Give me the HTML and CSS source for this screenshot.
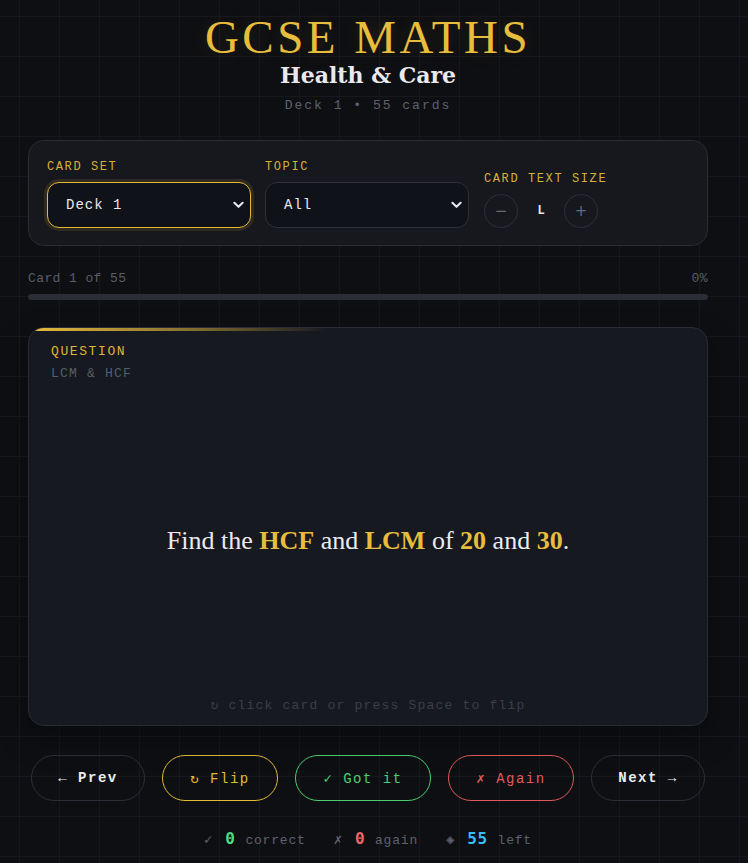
FILE: index.html
```html
<!DOCTYPE html>
<html lang="en">
<head>
<meta charset="utf-8">
<title>GCSE Maths Flashcards</title>
<link rel="stylesheet" href="styles.css">
</head>
<body>
<div class="page">
  <header class="header">
    <h1 class="title">GCSE MATHS</h1>
    <h2 class="subtitle">Health &amp; Care</h2>
    <p class="meta">Deck 1 • 55 cards</p>
  </header>

  <section class="controls">
    <div class="field field-select">
      <label class="label">CARD SET</label>
      <div class="select focused"><span>Deck 1</span><svg class="chev" viewBox="0 0 12 8" width="11" height="8"><path d="M1.5 1.5 L6 6 L10.5 1.5" fill="none" stroke="#e8e8ec" stroke-width="2.2" stroke-linecap="round" stroke-linejoin="round"/></svg></div>
    </div>
    <div class="field field-select">
      <label class="label">TOPIC</label>
      <div class="select"><span>All</span><svg class="chev" viewBox="0 0 12 8" width="11" height="8"><path d="M1.5 1.5 L6 6 L10.5 1.5" fill="none" stroke="#e8e8ec" stroke-width="2.2" stroke-linecap="round" stroke-linejoin="round"/></svg></div>
    </div>
    <div class="field field-size">
      <label class="label">CARD TEXT SIZE</label>
      <div class="size-row">
        <button class="circle">−</button>
        <span class="size-val">L</span>
        <button class="circle">+</button>
      </div>
    </div>
  </section>

  <section class="progress">
    <div class="progress-text"><span>Card 1 of 55</span><span>0%</span></div>
    <div class="bar"><div class="bar-fill" style="width:0%"></div></div>
  </section>

  <section class="card">
    <div class="card-accent"></div>
    <div class="card-kind">QUESTION</div>
    <div class="card-topic">LCM &amp; HCF</div>
    <div class="card-body">
      <p class="card-text">Find the <b>HCF</b> and <b>LCM</b> of <b>20</b> and <b>30</b>.</p>
    </div>
    <div class="card-hint">↻ click card or press Space to flip</div>
  </section>

  <nav class="actions">
    <button class="btn btn-plain">← Prev</button>
    <button class="btn btn-flip">↻ Flip</button>
    <button class="btn btn-good">✓ Got it</button>
    <button class="btn btn-again">✗ Again</button>
    <button class="btn btn-plain">Next →</button>
  </nav>

  <footer class="stats">
    <span class="stat"><span class="ico">✓</span><b class="n green">0</b>correct</span>
    <span class="stat"><span class="ico">✗</span><b class="n red">0</b>again</span>
    <span class="stat"><span class="ico">◈</span><b class="n blue">55</b>left</span>
  </footer>
</div>
</body>
</html>
```

FILE: styles.css
```css
* { box-sizing: border-box; }
html, body { margin: 0; padding: 0; }
body {
  background-color: #0e0f13;
  background-image:
    linear-gradient(to right, #17181d 1px, transparent 1px),
    linear-gradient(to bottom, #17181d 1px, transparent 1px);
  background-size: 40px 40px;
  background-position: 19px 16px;
  color: #e8e8ec;
  font-family: "Liberation Mono", "DejaVu Sans Mono", monospace;
  min-height: 863px;
}
.page {
  width: 680px;
  margin-left: 28px;
  padding-top: 12px;
  padding-bottom: 20px;
}
.header { text-align: center; }
.title {
  margin: 0;
  font-family: "Liberation Serif", "DejaVu Serif", serif;
  font-weight: 400;
  font-size: 47px;
  line-height: 50px;
  letter-spacing: 3.5px;
  color: #e8bd3c;
  text-shadow: 0 0 18px rgba(232, 189, 60, 0.15);
}
.subtitle {
  margin: 0;
  font-family: "DejaVu Serif", "Liberation Serif", serif;
  font-weight: 700;
  font-size: 22px;
  line-height: 26px;
  color: #e9e9ee;
}
.meta {
  margin: 10px 0 0;
  font-size: 13px;
  letter-spacing: 2px;
  color: #5f626d;
  line-height: 16px;
}

.controls {
  margin-top: 26px;
  background: #17181d;
  border: 1px solid #2a2b33;
  border-radius: 16px;
  padding: 19px 18px 17px;
  display: flex;
  align-items: flex-end;
  gap: 14px;
}
.field { display: flex; flex-direction: column; }
.field-select { width: 204px; }
.label {
  font-size: 12px;
  letter-spacing: 1.6px;
  color: #d9b037;
  font-weight: 400;
  line-height: 14px;
  margin-bottom: 8px;
}
.select {
  height: 46px;
  border: 1px solid #2d2f38;
  border-radius: 12px;
  background: #10121a;
  display: flex;
  align-items: center;
  justify-content: space-between;
  padding: 0 6px 0 18px;
  font-size: 14px;
  letter-spacing: 1px;
  color: #e8e8ec;
}
.select.focused {
  border-color: #e3b936;
  box-shadow: 0 0 0 3px rgba(227, 185, 54, 0.12);
}
.field-size { margin-left: 1px; }
.size-row { display: flex; align-items: center; gap: 12px; }
.circle {
  width: 34px; height: 34px;
  border-radius: 50%;
  border: 1px solid #2d2f38;
  background: transparent;
  color: #676a75;
  font-family: "DejaVu Sans", sans-serif;
  font-size: 15px;
  padding: 0;
  display: flex; align-items: center; justify-content: center;
}
.size-val {
  width: 22px;
  text-align: center;
  font-size: 12px;
  font-weight: 700;
  color: #e8e8ec;
}

.progress { margin-top: 26px; }
.progress-text {
  display: flex; justify-content: space-between;
  font-size: 13px;
  letter-spacing: 0.4px;
  color: #5a5d68;
  line-height: 14px;
}
.bar {
  margin-top: 8px;
  height: 6px;
  border-radius: 3px;
  background: #2a2c36;
  overflow: hidden;
}
.bar-fill { height: 100%; background: #e8bd3c; }

.card {
  position: relative;
  margin-top: 27px;
  height: 399px;
  background: #161920;
  border: 1px solid #2a2c35;
  border-radius: 16px;
  padding: 16px 22px 12px;
  display: flex;
  flex-direction: column;
  overflow: hidden;
  box-shadow: 0 12px 30px rgba(0,0,0,0.35);
}
.card-accent {
  position: absolute;
  left: 0; top: 0;
  width: 100%;
  height: 3px;
  background: linear-gradient(to right, #e8bd3c 0%, rgba(232,189,60,0.5) 25%, rgba(232,189,60,0) 44%);
}
.card-kind {
  font-size: 13px;
  letter-spacing: 1.6px;
  color: #e0b43a;
  line-height: 15px;
}
.card-topic {
  margin-top: 7px;
  font-size: 13px;
  letter-spacing: 1.2px;
  color: #5a5d68;
  line-height: 15px;
}
.card-body {
  flex: 1;
  display: flex;
  align-items: center;
  justify-content: center;
  padding-top: 4px;
}
.card-text {
  margin: 0;
  font-family: "Liberation Serif", "DejaVu Serif", serif;
  font-size: 26px;
  color: #ecebf0;
  text-align: center;
}
.card-text b { color: #e8bd3c; }
.card-hint {
  text-align: center;
  font-size: 13px;
  color: #3b3e49;
  letter-spacing: 1.2px;
}

.actions {
  margin-top: 29px;
  display: flex;
  justify-content: center;
  gap: 17px;
}
.btn {
  height: 46px;
  border-radius: 23px;
  background: transparent;
  font-family: "Liberation Mono", "DejaVu Sans Mono", monospace;
  font-size: 14px;
  letter-spacing: 1.5px;
  padding: 0;
  display: flex; align-items: center; justify-content: center;
}
.btn-plain { width: 114px; border: 1px solid #2c2e37; color: #ececf0; font-weight: 700; }
.btn-flip { width: 116px; border: 1px solid #e3b936; color: #e3b936; }
.btn-good { width: 136px; border: 1px solid #4cce6f; color: #4cce6f; }
.btn-again { width: 126px; border: 1px solid #e05a5a; color: #e05a5a; }

.stats {
  margin-top: 28px;
  display: flex;
  justify-content: center;
  gap: 28px;
  font-size: 13px;
  color: #5f626d;
  letter-spacing: 0.8px;
}
.stat { display: inline-flex; align-items: baseline; }
.ico { color: #5f626d; margin-right: 12px; font-size: 14px; }
.n {
  font-family: "DejaVu Sans Mono", monospace;
  font-size: 16px;
  font-weight: 700;
  margin-right: 10px;
  letter-spacing: 0.5px;
}
.green { color: #4ade80; }
.red { color: #f06565; }
.blue { color: #38bdf8; }
```
